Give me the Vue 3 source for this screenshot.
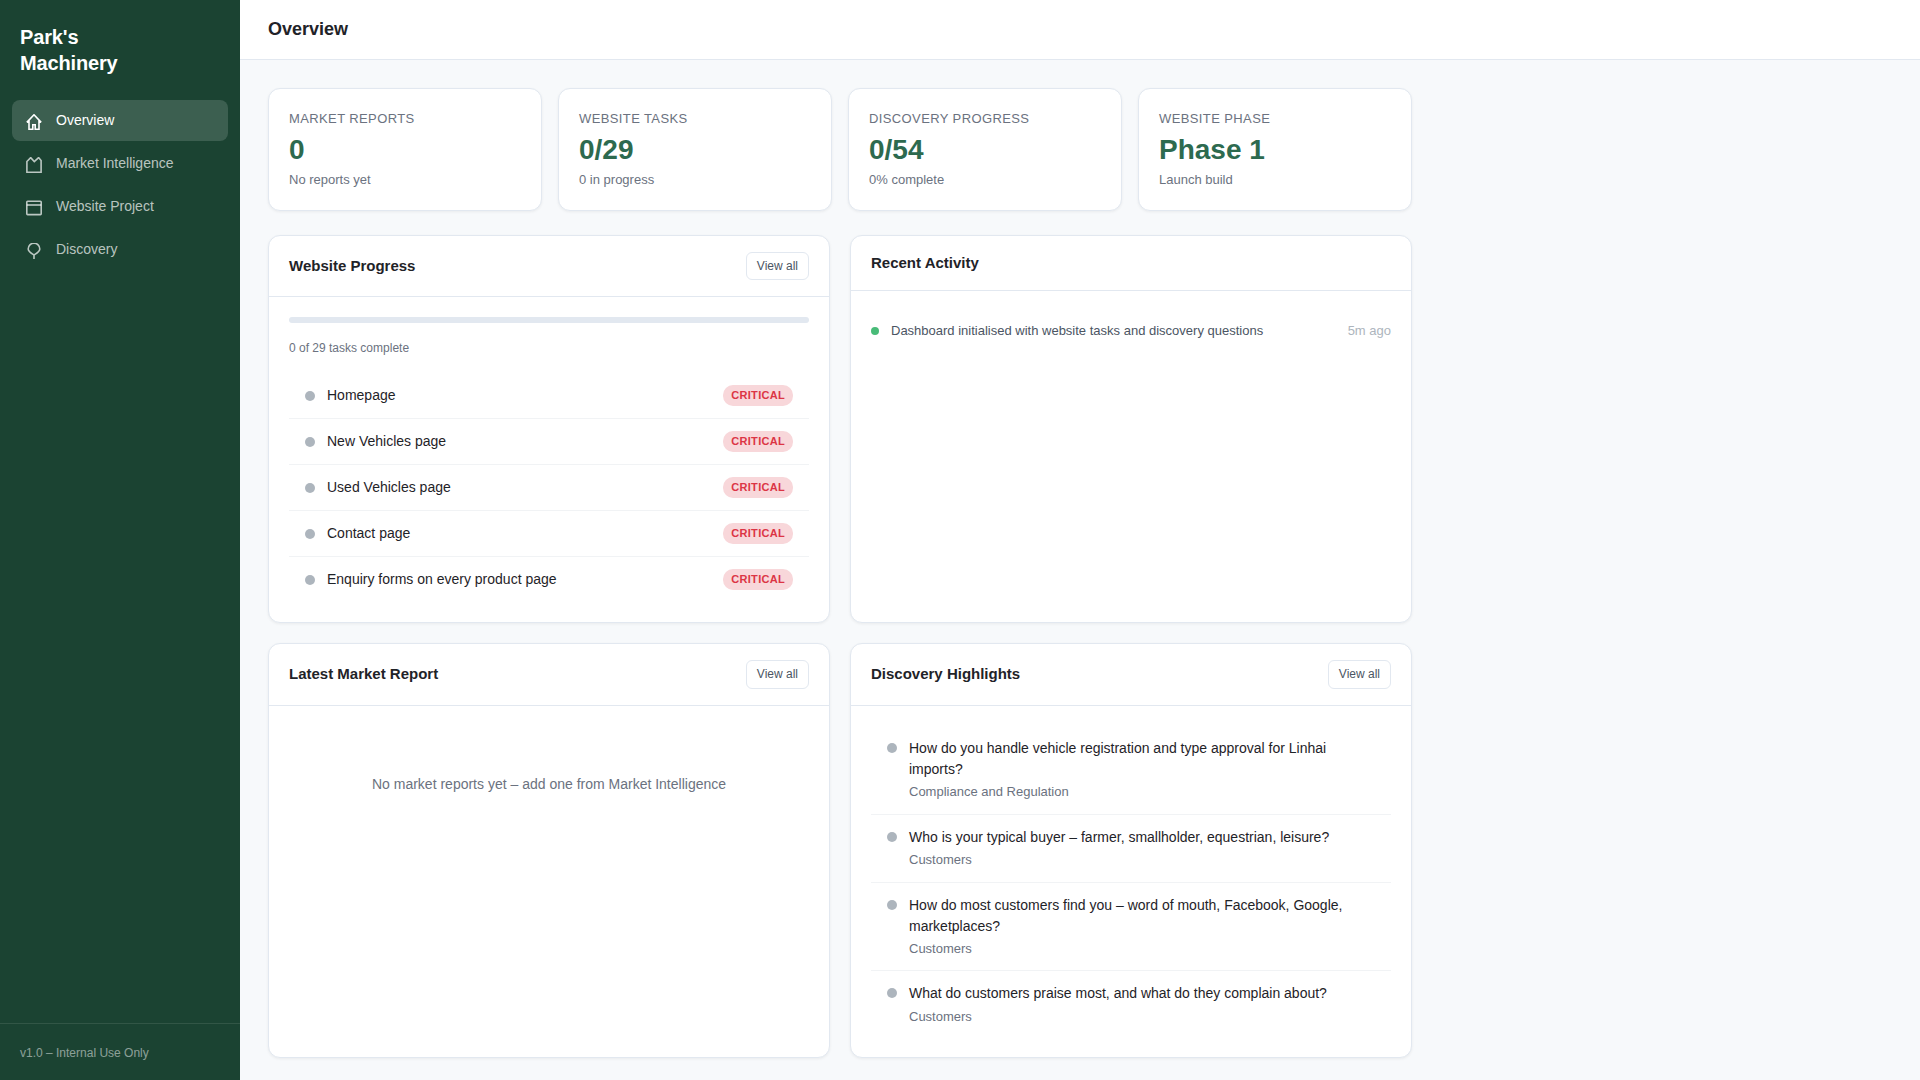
<script setup>
const stats = [
  { label: 'Market Reports', value: '0', sub: 'No reports yet' },
  { label: 'Website Tasks', value: '0/29', sub: '0 in progress' },
  { label: 'Discovery Progress', value: '0/54', sub: '0% complete' },
  { label: 'Website Phase', value: 'Phase 1', sub: 'Launch build' },
]
const tasks = ['Homepage', 'New Vehicles page', 'Used Vehicles page', 'Contact page', 'Enquiry forms on every product page']
const questions = [
  { q: 'How do you handle vehicle registration and type approval for Linhai imports?', c: 'Compliance and Regulation' },
  { q: 'Who is your typical buyer – farmer, smallholder, equestrian, leisure?', c: 'Customers' },
  { q: 'How do most customers find you – word of mouth, Facebook, Google, marketplaces?', c: 'Customers' },
  { q: 'What do customers praise most, and what do they complain about?', c: 'Customers' },
]
</script>

<template>
  <div class="app">
    <aside class="sidebar">
      <div class="brand">Park's<br>Machinery</div>
      <nav class="nav">
        <a class="nav-item active">
          <svg class="ico" viewBox="0 0 16 16"><path d="M.8 8.4 8 .8l7.2 7.6M3 6.5v8.7h3.8v-4.4h2.4v4.4H13V6.5" /></svg>
          <span>Overview</span>
        </a>
        <a class="nav-item">
          <svg class="ico" viewBox="0 0 16 16"><path d="M.9 15.2V4.5L4.7.6l3.6 3.9L12.6.6l2.5 2.9v11.7Z" /></svg>
          <span>Market Intelligence</span>
        </a>
        <a class="nav-item">
          <svg class="ico" viewBox="0 0 16 16"><rect x=".8" y="1.2" width="14.4" height="13.4" rx=".8" /><path d="M.8 5h14.4" /></svg>
          <span>Website Project</span>
        </a>
        <a class="nav-item">
          <svg class="ico" viewBox="0 0 16 16"><path d="M8 12C5 10.2 2.2 8.7 2.2 6a5.8 5.8 0 0 1 11.6 0C13.8 8.7 11 10.2 8 12V16" /></svg>
          <span>Discovery</span>
        </a>
      </nav>
      <div class="foot">v1.0 – Internal Use Only</div>
    </aside>
    <div class="main">
      <header class="top"><h1>Overview</h1></header>
      <main class="content">
        <div class="stats">
          <div v-for="s in stats" :key="s.label" class="card stat">
            <div class="stat-label">{{ s.label }}</div>
            <div class="stat-value">{{ s.value }}</div>
            <div class="stat-sub">{{ s.sub }}</div>
          </div>
        </div>
        <div class="grid">
          <section class="card panel">
            <div class="head"><h2>Website Progress</h2><button class="btn">View all</button></div>
            <div class="body">
              <div class="bar"></div>
              <div class="bar-label">0 of 29 tasks complete</div>
              <div class="task" v-for="t in tasks" :key="t">
                <span class="dot"></span>
                <span class="task-name">{{ t }}</span>
                <span class="badge">Critical</span>
              </div>
            </div>
          </section>
          <section class="card panel">
            <div class="head"><h2>Recent Activity</h2></div>
            <div class="body">
              <div class="activity">
                <span class="dot-green"></span>
                <span class="activity-text">Dashboard initialised with website tasks and discovery questions</span>
                <span class="activity-time">5m ago</span>
              </div>
            </div>
          </section>
          <section class="card panel">
            <div class="head"><h2>Latest Market Report</h2><button class="btn">View all</button></div>
            <div class="body">
              <div class="empty">No market reports yet – add one from Market Intelligence</div>
            </div>
          </section>
          <section class="card panel">
            <div class="head"><h2>Discovery Highlights</h2><button class="btn">View all</button></div>
            <div class="body">
              <div class="q" v-for="q in questions" :key="q.q">
                <span class="dot q-dot"></span>
                <div>
                  <div class="q-text">{{ q.q }}</div>
                  <div class="q-cat">{{ q.c }}</div>
                </div>
              </div>
            </div>
          </section>
        </div>
      </main>
    </div>
  </div>
</template>

<style>
html, body { margin: 0; background: #f7f9fb; }
</style>

<style scoped>
* { box-sizing: border-box; }
.app { display: flex; min-height: 100vh; font-family: "Liberation Sans", Arial, sans-serif; color: #1f2328; font-size: 14px; line-height: 1.5; }
.sidebar { width: 240px; height: 1080px; flex-shrink: 0; background: #1b4332; display: flex; flex-direction: column; position: sticky; top: 0; }
.brand { padding: 24px 20px 24px; font-size: 20px; font-weight: 700; line-height: 26px; color: #fff; letter-spacing: -.15px; }
.nav { display: flex; flex-direction: column; gap: 2px; padding: 0 12px; flex: 1; }
.nav-item { display: flex; align-items: center; gap: 12px; height: 41px; padding: 0 14px; border-radius: 8px; color: rgba(255,255,255,.7); }
.nav-item.active { background: rgba(255,255,255,.15); color: #fff; }
.ico { width: 16px; height: 16px; flex-shrink: 0; fill: none; stroke: currentColor; stroke-width: 1.6; margin-top: 2px; margin-right: 2px; }
.foot { border-top: 1px solid rgba(255,255,255,.1); padding: 20px; font-size: 12px; color: rgba(255,255,255,.5); height: 57px; }
.main { flex: 1; min-width: 0; }
.top { height: 60px; background: #fff; border-bottom: 1px solid #e2e8f0; display: flex; align-items: center; padding: 0 28px; }
h1 { margin: 0; font-size: 18px; font-weight: 700; }
.content { padding: 28px; max-width: 1200px; }
.card { background: #fff; border: 1px solid #e2e8f0; border-radius: 12px; box-shadow: 0 1px 3px rgba(0,0,0,.06); }
.stats { display: grid; grid-template-columns: repeat(4, 1fr); gap: 16px; margin-bottom: 24px; }
.stat { padding: 20px; }
.stat-label { font-size: 13px; color: #6b7280; text-transform: uppercase; letter-spacing: .39px; }
.stat-value { font-size: 28px; font-weight: 700; color: #2d6a4f; line-height: 1.2; margin: 4px 0; }
.stat-sub { font-size: 13px; color: #6b7280; }
.grid { display: grid; grid-template-columns: 1fr 1fr; gap: 20px; }
.head { display: flex; align-items: center; justify-content: space-between; padding: 16px 20px; border-bottom: 1px solid #e2e8f0; }
h2 { margin: 0; font-size: 15px; font-weight: 700; }
.btn { font: inherit; font-size: 12px; line-height: 18.6px; padding: 4px 10px; color: #4b5563; background: #fff; border: 1px solid #e2e8f0; border-radius: 6px; }
.body { padding: 20px; }
.bar { height: 6px; border-radius: 3px; background: #e2e8f0; margin-bottom: 16px; }
.bar-label { font-size: 12px; color: #6b7280; margin-bottom: 16px; }
.task { display: flex; align-items: center; gap: 12px; padding: 12px 16px; border-bottom: 1px solid #f1f3f5; }
.task:last-child { border-bottom: 0; }
.dot { width: 10px; height: 10px; border-radius: 50%; background: #adb5bd; flex-shrink: 0; }
.task-name { flex: 1; }
.badge { font-size: 11px; font-weight: 700; line-height: 15px; padding: 3px 8px; border-radius: 10px; letter-spacing: .3px; text-transform: uppercase; background: #f8d7da; color: #dc3545; }
.activity { display: flex; align-items: center; gap: 12px; padding: 10px 0; font-size: 13px; }
.dot-green { width: 8px; height: 8px; border-radius: 50%; background: #48bb78; flex-shrink: 0; }
.activity-text { flex: 1; color: #4b5563; }
.activity-time { color: #adb5bd; }
.empty { padding: 48px 0; text-align: center; color: #6b7280; }
.q { display: flex; gap: 12px; padding: 12px 16px; border-bottom: 1px solid #f1f3f5; }
.q:last-child { border-bottom: 0; padding-bottom: 10.4px; }
.q-dot { margin-top: 5px; }
.q-cat { font-size: 13px; color: #6b7280; margin-top: 2.4px; }
</style>
